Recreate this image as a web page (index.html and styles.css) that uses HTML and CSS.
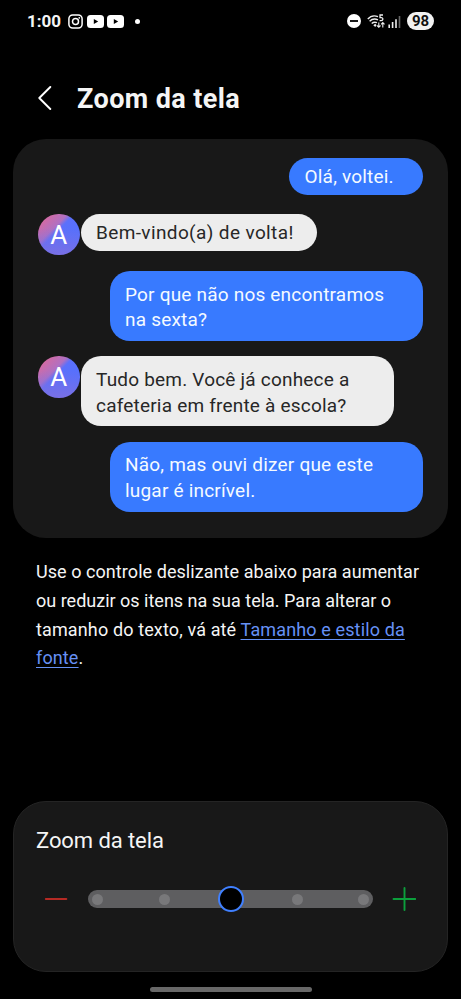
FILE: index.html
```html
<!DOCTYPE html>
<html lang="pt-BR">
<head>
<meta charset="utf-8">
<meta name="viewport" content="width=device-width">
<title>Zoom da tela</title>
<link rel="stylesheet" href="styles.css">
</head>
<body>
<div class="status">
  <span class="time">1:00</span>
  <svg class="insta" width="15" height="15" viewBox="0 0 15 15" fill="none" stroke="#fff" stroke-width="1.5"><rect x=".9" y=".9" width="13.2" height="13.2" rx="3.8"/><circle cx="7.5" cy="7.5" r="3"/><circle cx="11.3" cy="3.8" r=".9" fill="#fff" stroke="none"/></svg>
  <svg class="tube" width="17" height="13" viewBox="0 0 17 13"><rect width="17" height="13" rx="3.5" fill="#fff"/><path d="M6.8 4v5l4.4-2.5z" fill="#000"/></svg>
  <svg class="tube" width="17" height="13" viewBox="0 0 17 13"><rect width="17" height="13" rx="3.5" fill="#fff"/><path d="M6.8 4v5l4.4-2.5z" fill="#000"/></svg>
  <span class="dot"></span>
  <svg class="dnd" width="14" height="14" viewBox="0 0 14 14"><circle cx="7" cy="7" r="7" fill="#fff"/><path d="M3 7h8" stroke="#000" stroke-width="1.8"/></svg>
  <svg class="wifi" width="19" height="15" viewBox="0 0 19 15" fill="none" stroke="#eee" stroke-width="1.4"><path d="M.8 5C3.5 2 7.5 1.3 11 2.7M2.6 7.3C5 4.9 8 4.5 11 5.8M4.7 9.5C6.5 7.9 8.2 7.9 10 8.7"/><path d="M6.3 11.2L8.3 9.8L9.6 11.3L8.2 13z" fill="#eee" stroke="none"/><path d="M16 1h-3v2.6h1.2c2.4 0 2.1 3.1-.1 3.1h-1.5" stroke-width="1.3"/><path d="M11.8 8.5v4.8m-1.7-1.8l1.7 1.8l1.7-1.8M15.8 13.4V8.6m-1.7 1.8l1.7-1.8l1.7 1.8" stroke-width="1.1"/></svg>
  <svg class="signal" width="13" height="13" viewBox="0 0 13 13" stroke-width="1.6"><path d="M1.2 9.5V13M4.6 7V13M8 4.2V13" stroke="#eee"/><path d="M11.5 1V13" stroke="#666"/></svg>
  <span class="battery">98</span>
</div>
<header class="header">
  <svg width="14" height="24" viewBox="0 0 14 24" fill="none" stroke="#fff" stroke-width="1.9" stroke-linecap="round" stroke-linejoin="round"><path d="M12.3 1L1.3 12l11 11"/></svg>
  <h1>Zoom da tela</h1>
</header>
<main>
  <section class="card chat">
    <div class="row sent first"><div class="bubble single hello">Olá, voltei.</div></div>
    <div class="row"><div class="avatar">A</div><div class="bubble single welcome">Bem-vindo(a) de volta!</div></div>
    <div class="row sent"><div class="bubble">Por que não nos encontramos<br>na sexta?</div></div>
    <div class="row"><div class="avatar">A</div><div class="bubble">Tudo bem. Você já conhece a<br>cafeteria em frente à escola?</div></div>
    <div class="row sent"><div class="bubble">Não, mas ouvi dizer que este<br>lugar é incrível.</div></div>
  </section>
  <p class="help">Use o controle deslizante abaixo para aumentar<br><span class="tight">ou reduzir os itens na sua tela. Para alterar o</span><br><span class="wide">tamanho do texto, vá até <a>Tamanho e estilo da<br>fonte</a>.</span></p>
  <section class="card control">
    <h2>Zoom da tela</h2>
    <div class="slider">
      <svg width="24" height="24" viewBox="0 0 24 24" stroke="#b52a24" stroke-width="2" stroke-linecap="round"><path d="M1.8 12h20.5"/></svg>
      <div class="track"><i></i><i></i><i class="thumb"></i><i></i><i></i></div>
      <svg width="24" height="24" viewBox="0 0 24 24" stroke="#0c9f3c" stroke-width="1.9" stroke-linecap="round"><path d="M1.5 12h22M12.5 1v22"/></svg>
    </div>
  </section>
</main>
<div class="homebar"></div>
</body>
</html>
```
FILE: styles.css
```css
* { box-sizing: border-box; }
body {
  margin: 0;
  height: 999px;
  overflow: hidden;
  display: flex;
  flex-direction: column;
  background: #000;
  color: #f5f5f5;
  font-family: Roboto, "Noto Sans", sans-serif;
}
svg { display: block; flex: none; }
.status {
  display: flex;
  align-items: center;
  height: 42px;
  padding: 0 27px 0 27px;
}
.time { width: 41px; font-size: 17px; font-weight: 700; white-space: nowrap; }
.insta { margin-right: 4px; }
.tube { margin-right: 3px; }
.dot { width: 5px; height: 5px; margin-left: 8px; border-radius: 50%; background: #fff; }
.dnd { margin-left: auto; margin-right: 6px; }
.wifi { margin-right: 2px; }
.signal { margin-right: 6px; }
.battery {
  width: 27px;
  height: 18px;
  border-radius: 9px;
  background: #f2f2f2;
  color: #111;
  font-size: 15px;
  line-height: 18px;
  font-weight: 700;
  text-align: center;
}
.header {
  display: flex;
  align-items: center;
  gap: 25px;
  height: 97px;
  padding: 14px 0 0 38px;
}
h1 { margin: 2px 0 0; font-size: 27px; font-weight: 700; letter-spacing: .4px; }
.card { margin: 0 13px; border-radius: 33px; background: #181818; }
.chat { height: 399px; padding: 19px 25.5px 0 25px; }
.row { display: flex; align-items: flex-start; margin-bottom: 15.4px; }
.row.first { margin-bottom: 19.3px; }
.sent { justify-content: flex-end; }
.avatar {
  width: 41.5px;
  height: 41.5px;
  margin-right: 1px;
  border-radius: 50%;
  background:
    linear-gradient(to bottom, rgba(128, 112, 225, 0) 35%, rgba(128, 112, 225, .85) 100%),
    linear-gradient(135deg, #d16ba5 15%, #b070c2 36%, #5b70fb 44%, #5070ff 100%);
  color: #fff;
  font-size: 26px;
  line-height: 43px;
  text-align: center;
}
.bubble {
  width: 313px;
  height: 70px;
  padding: 10.8px 0 0 15.5px;
  border-radius: 20px;
  background: #ededed;
  color: #272727;
  font-size: 19px;
  line-height: 25.7px;
  letter-spacing: .2px;
  white-space: nowrap;
}
.sent .bubble { background: #387aff; color: #f5faff; }
.bubble.single { height: 36.7px; padding-top: 6.3px; }
.hello { width: 133.5px; }
.welcome { width: 236px; letter-spacing: .38px; }
.help {
  height: 115px;
  margin: 20px 0 0 36px;
  font-size: 18px;
  line-height: 28.8px;
  letter-spacing: .06px;
  white-space: nowrap;
}
.tight { letter-spacing: 0; }
.wide { letter-spacing: .13px; }
a { color: #6691f5; text-decoration: underline; text-decoration-thickness: 1px; text-underline-offset: 3px; }
.control {
  height: 171px;
  margin-top: 128px;
  padding: 24px 30px 0 22px;
  border: 1px solid #242424;
}
h2 { margin: 0; font-size: 22px; font-weight: 400; line-height: 30px; letter-spacing: -.08px; }
.slider { display: flex; align-items: center; height: 28px; margin-top: 29px; padding-left: 8px; }
.track {
  width: 285px;
  height: 18px;
  margin: 0 19px 0 20px;
  padding: 0 4px;
  border-radius: 9px;
  background: #5e5e60;
  display: flex;
  align-items: center;
  justify-content: space-between;
}
.track i { width: 11px; height: 11px; border-radius: 50%; background: #78787a; }
.track .thumb { width: 26px; height: 26px; margin: 0 -7.5px; background: #000; border: 2.5px solid #4080ff; }
.homebar { width: 162px; height: 5px; margin: 15px auto 0; border-radius: 3px; background: #686868; }
```
